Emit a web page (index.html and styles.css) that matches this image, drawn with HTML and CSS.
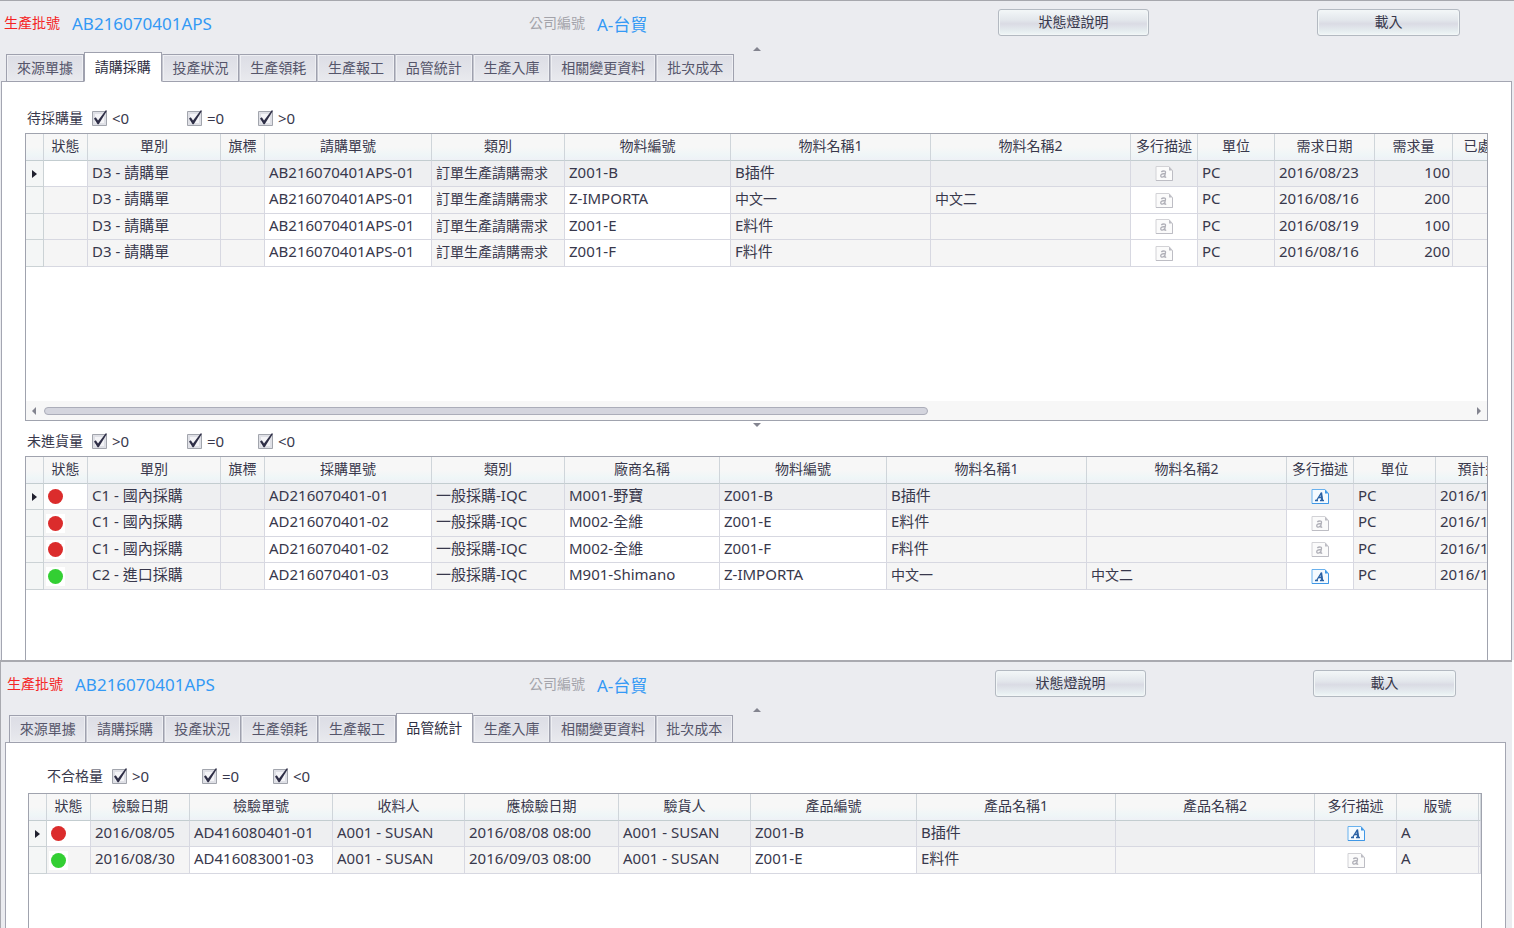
FILE: index.html
```
<!DOCTYPE html>
<html lang="zh-Hant">
<head>
  <meta charset="UTF-8">
  <meta name="viewport" content="width=device-width, initial-scale=1.0">
  <title>生產批號</title>
  <link rel="stylesheet" href="styles.css">
</head>
<body>

<svg class="defs" aria-hidden="true">
  <symbol id="note-on" viewBox="0 0 18 15">
    <path d="M1 .5h13l3.500 4v10h-16.500z" fill="#f4faff" stroke="#69b1ee"/>
    <path d="M1 14.500h16.500V4.500" fill="none" stroke="#3f97e6"/>
    <path d="M14 .5l3.500 4H14z" fill="#3f97e6"/>
    <path d="M4 11.500h3M9 11.500h4M5.500 11.500L10.500 3.500M10.500 3.500L11.500 11.500M7.500 8.500h3.500" fill="none" stroke="#2b62a5" stroke-width="1.300"/>
    <path d="M10.300 3l1.700 8.500h-1.700l-1-6z" fill="#2b62a5"/>
  </symbol>
  <symbol id="note-off" viewBox="0 0 18 15">
    <path d="M1 .5h13l3.500 4v10h-16.500z" fill="#fbfbfb" stroke="#d2d2d6"/>
    <path d="M1 14.500h16.500V4.500" fill="none" stroke="#bdbdc4"/>
    <path d="M14 .5l3.500 4H14z" fill="#bdbdc4"/>
    <path d="M6.300 6c1-1.200 4.500-1.600 4.200.3L9.700 10.500c-.1.900.6.900 1.500.4M10 7.500C7.500 7.500 5.600 8.500 5.700 10c.2 1.700 2.800 1.300 4-.4" fill="none" stroke="#b0b0b8" stroke-width="1.300"/>
  </symbol>
</svg>

<section class="window purchase">
  <header class="topbar">
    <div class="field"><span class="label required">生產批號</span><span class="value">AB216070401APS</span></div>
    <div class="field"><span class="label">公司編號</span><span class="value">A-台貿</span></div>
    <div><button class="btn legend">狀態燈說明</button></div>
    <div><button class="btn">載入</button></div>
  </header>
  <div class="splitter"><i class="up"></i></div>
  <nav class="tabs">
    <button>來源單據</button>
    <button class="active">請購採購</button>
    <button>投產狀況</button>
    <button>生產領耗</button>
    <button>生產報工</button>
    <button>品管統計</button>
    <button>生產入庫</button>
    <button>相關變更資料</button>
    <button>批次成本</button>
  </nav>
  <div class="panel">
    <div class="filter">
      <span>待採購量</span>
      <label class="first"><input type="checkbox" checked>&lt;0</label>
      <label><input type="checkbox" checked>=0</label>
      <label><input type="checkbox" checked>&gt;0</label>
    </div>
    <div class="grid request">
      <div class="rows">
      <table>
        <colgroup>
          <col class="w-mark"><col class="w-flag"><col class="w-type"><col class="w-flag"><col class="w-item"><col class="w-type"><col class="w-code"><col class="w-name"><col class="w-name"><col class="w-desc"><col class="w-unit"><col class="w-date"><col class="w-qty"><col class="w-qty">
        </colgroup>
        <thead>
          <tr><th></th><th>狀態</th><th>單別</th><th>旗標</th><th>請購單號</th><th>類別</th><th>物料編號</th><th>物料名稱1</th><th>物料名稱2</th><th>多行描述</th><th>單位</th><th>需求日期</th><th>需求量</th><th>已處理量</th></tr>
        </thead>
        <tbody>
          <tr class="current"><td class="mark"><i></i></td><td class="focus"></td><td>D3 - 請購單</td><td></td><td class="edit">AB216070401APS-01</td><td class="cjk">訂單生產請購需求</td><td class="edit">Z001-B</td><td>B插件</td><td></td><td class="edit note"><svg><use href="#note-off"/></svg></td><td>PC</td><td>2016/08/23</td><td class="num">100</td><td></td></tr>
          <tr><td class="mark"></td><td></td><td>D3 - 請購單</td><td></td><td class="edit">AB216070401APS-01</td><td class="cjk">訂單生產請購需求</td><td class="edit">Z-IMPORTA</td><td class="cjk">中文一</td><td class="cjk">中文二</td><td class="edit note"><svg><use href="#note-off"/></svg></td><td>PC</td><td>2016/08/16</td><td class="num">200</td><td></td></tr>
          <tr><td class="mark"></td><td></td><td>D3 - 請購單</td><td></td><td class="edit">AB216070401APS-01</td><td class="cjk">訂單生產請購需求</td><td class="edit">Z001-E</td><td>E料件</td><td></td><td class="edit note"><svg><use href="#note-off"/></svg></td><td>PC</td><td>2016/08/19</td><td class="num">100</td><td></td></tr>
          <tr><td class="mark"></td><td></td><td>D3 - 請購單</td><td></td><td class="edit">AB216070401APS-01</td><td class="cjk">訂單生產請購需求</td><td class="edit">Z001-F</td><td>F料件</td><td></td><td class="edit note"><svg><use href="#note-off"/></svg></td><td>PC</td><td>2016/08/16</td><td class="num">200</td><td></td></tr>
        </tbody>
      </table>
      </div>
      <div class="scrollbar">
        <button class="left" aria-label="向左"></button>
        <div class="track"><div class="thumb"></div></div>
        <button class="right" aria-label="向右"></button>
      </div>
    </div>
    <div class="splitter"><i class="down"></i></div>
    <div class="filter">
      <span>未進貨量</span>
      <label class="first"><input type="checkbox" checked>&gt;0</label>
      <label><input type="checkbox" checked>=0</label>
      <label><input type="checkbox" checked>&lt;0</label>
    </div>
    <div class="grid order">
      <table>
        <colgroup>
          <col class="w-mark"><col class="w-flag"><col class="w-type"><col class="w-flag"><col class="w-item"><col class="w-type"><col class="w-vendor"><col class="w-item"><col class="w-name"><col class="w-name"><col class="w-desc"><col class="w-ver"><col class="w-date">
        </colgroup>
        <thead>
          <tr><th></th><th>狀態</th><th>單別</th><th>旗標</th><th>採購單號</th><th>類別</th><th>廠商名稱</th><th>物料編號</th><th>物料名稱1</th><th>物料名稱2</th><th>多行描述</th><th>單位</th><th>預計進貨</th></tr>
        </thead>
        <tbody>
          <tr class="current"><td class="mark"><i></i></td><td class="focus light"><i class="red"></i></td><td>C1 - 國內採購</td><td></td><td class="edit">AD216070401-01</td><td>一般採購-IQC</td><td class="edit">M001-野寶</td><td class="edit">Z001-B</td><td>B插件</td><td></td><td class="edit note"><svg><use href="#note-on"/></svg></td><td>PC</td><td>2016/1</td></tr>
          <tr><td class="mark"></td><td class="light"><i class="red"></i></td><td>C1 - 國內採購</td><td></td><td class="edit">AD216070401-02</td><td>一般採購-IQC</td><td class="edit">M002-全維</td><td class="edit">Z001-E</td><td>E料件</td><td></td><td class="edit note"><svg><use href="#note-off"/></svg></td><td>PC</td><td>2016/1</td></tr>
          <tr><td class="mark"></td><td class="light"><i class="red"></i></td><td>C1 - 國內採購</td><td></td><td class="edit">AD216070401-02</td><td>一般採購-IQC</td><td class="edit">M002-全維</td><td class="edit">Z001-F</td><td>F料件</td><td></td><td class="edit note"><svg><use href="#note-off"/></svg></td><td>PC</td><td>2016/1</td></tr>
          <tr><td class="mark"></td><td class="light"><i class="green"></i></td><td>C2 - 進口採購</td><td></td><td class="edit">AD216070401-03</td><td>一般採購-IQC</td><td class="edit">M901-Shimano</td><td class="edit">Z-IMPORTA</td><td class="cjk">中文一</td><td class="cjk">中文二</td><td class="edit note"><svg><use href="#note-on"/></svg></td><td>PC</td><td>2016/1</td></tr>
        </tbody>
      </table>
    </div>
  </div>
</section>

<section class="window quality">
  <header class="topbar">
    <div class="field"><span class="label required">生產批號</span><span class="value">AB216070401APS</span></div>
    <div class="field"><span class="label">公司編號</span><span class="value">A-台貿</span></div>
    <div><button class="btn legend">狀態燈說明</button></div>
    <div><button class="btn">載入</button></div>
  </header>
  <div class="splitter"><i class="up"></i></div>
  <nav class="tabs">
    <button>來源單據</button>
    <button>請購採購</button>
    <button>投產狀況</button>
    <button>生產領耗</button>
    <button>生產報工</button>
    <button class="active">品管統計</button>
    <button>生產入庫</button>
    <button>相關變更資料</button>
    <button>批次成本</button>
  </nav>
  <div class="panel">
    <div class="filter">
      <span>不合格量</span>
      <label class="first"><input type="checkbox" checked>&gt;0</label>
      <label><input type="checkbox" checked>=0</label>
      <label><input type="checkbox" checked>&lt;0</label>
    </div>
    <div class="grid inspect">
      <table>
        <colgroup>
          <col class="w-mark"><col class="w-flag"><col class="w-date"><col class="w-check"><col class="w-type"><col class="w-vendor"><col class="w-type"><col class="w-code"><col class="w-name"><col class="w-name"><col class="w-ver"><col class="w-ver"><col>
        </colgroup>
        <thead>
          <tr><th></th><th>狀態</th><th>檢驗日期</th><th>檢驗單號</th><th>收料人</th><th>應檢驗日期</th><th>驗貨人</th><th>產品編號</th><th>產品名稱1</th><th>產品名稱2</th><th>多行描述</th><th>版號</th><th></th></tr>
        </thead>
        <tbody>
          <tr class="current"><td class="mark"><i></i></td><td class="focus light"><i class="red"></i></td><td>2016/08/05</td><td class="edit">AD416080401-01</td><td>A001 - SUSAN</td><td>2016/08/08 08:00</td><td>A001 - SUSAN</td><td class="edit">Z001-B</td><td>B插件</td><td></td><td class="edit note"><svg><use href="#note-on"/></svg></td><td>A</td><td class="rest"></td></tr>
          <tr><td class="mark"></td><td class="light"><i class="green"></i></td><td>2016/08/30</td><td class="edit">AD416083001-03</td><td>A001 - SUSAN</td><td>2016/09/03 08:00</td><td>A001 - SUSAN</td><td class="edit">Z001-E</td><td>E料件</td><td></td><td class="edit note"><svg><use href="#note-off"/></svg></td><td>A</td><td class="rest"></td></tr>
        </tbody>
      </table>
    </div>
  </div>
</section>

</body>
</html>
```

FILE: styles.css
```
* {
  box-sizing: border-box;
}
body {
  margin: 0;
  height: 100vh;
  display: flex;
  flex-direction: column;
  overflow: hidden;
  background-color: #fff;
  color: #38384c;
  font-family: "Noto Sans", "Noto Sans CJK TC", sans-serif;
  font-size: 15px;
}
button, input {
  font: inherit;
  color: inherit;
  margin: 0;
  padding: 0;
}
.defs {
  display: none;
}

/* window frame */
.window {
  display: flex;
  flex-direction: column;
  background-color: #ebecf0;
}
.purchase {
  border-top: 1px solid #a6a7ad;
  flex: none;
}
.quality {
  flex: 1;
  min-height: 0;
  margin-right: 2px;
  border-top: 2px solid #a9aab0;
  border-left: 1px solid #a9aab0;
}

.topbar {
  display: grid;
  grid-template-columns: 529fr 469fr 319fr 197fr;
  height: 45px;
  padding-top: 8px;
}
.quality .topbar {
  grid-template-columns: 528fr 466fr 318fr 199fr;
}
.field {
  display: flex;
  align-items: center;
  gap: 12px;
  height: 28px;
  white-space: nowrap;
}
.label {
  color: #a3a3aa;
  font-size: 14px;
  padding-bottom: 2px;
}
.label.required {
  color: #f52323;
  margin-left: 4px;
}
.quality .label.required {
  margin-left: 6px;
}
.value {
  color: #3399f5;
  font-size: 17px;
}
.btn {
  width: 143px;
  height: 27px;
  padding-bottom: 3px;
  border: 1px solid #b3b9c1;
  border-radius: 3px;
  background: linear-gradient(#f3f7f8, #e3e7ec 40%, #dadbe4 55%, #e6edf0 85%, #f0f7f7);
  box-shadow: inset 0 0 0 1px #f2f6f7;
  font-size: 14px;
}
.btn.legend {
  width: 151px;
}

.splitter {
  display: flex;
  justify-content: center;
  height: 6px;
}
.splitter i {
  border: 4px solid transparent;
  height: 0;
}
.splitter .up {
  border-top: 0;
  border-bottom-color: #83848f;
  margin-top: 1px;
}
.splitter .down {
  border-bottom: 0;
  border-top-color: #83848f;
  margin-top: 2px;
}

/* tabs */
.tabs {
  display: flex;
  align-items: flex-end;
  width: 728px;
  height: 30px;
  margin-left: 6px;
  margin-bottom: -1px;
  z-index: 1;
}
.quality .tabs {
  width: 724px;
  margin-left: 8px;
}
.tabs button {
  flex: 1 1 auto;
  height: 28px;
  padding-bottom: 2px;
  border: 1px solid #9fa1ae;
  border-left-color: #c4c6cf;
  background: linear-gradient(#dcdde5, #e3e4ea 60%, #e9eaee);
  box-shadow: inset 0 0 0 1px #eeeff3;
  color: #55556a;
  font-size: 14px;
  white-space: nowrap;
}
.tabs button:first-child {
  border-left-color: #9fa1ae;
}
.tabs .active {
  height: 30px;
  background: #fff;
  border-color: #9fa1ae;
  border-bottom-color: #fff;
  box-shadow: none;
  color: #2e2e42;
}

.panel {
  margin: 0 2px 0 1px;
  padding: 22px 23px 0 23px;
  border: 1px solid #a4a6b2;
  border-bottom: 0;
  background-color: #fff;
}
.quality .panel {
  flex: 1;
  display: flex;
  flex-direction: column;
  margin: 0 6px 0 4px;
  padding: 19px 23px 0 22px;
}

/* filter row */
.filter {
  display: flex;
  align-items: center;
  height: 27px;
  margin-bottom: 2px;
  padding-left: 2px;
}
.filter span {
  font-size: 14px;
  width: 65px;
  padding-bottom: 2px;
}
.filter label {
  display: flex;
  align-items: center;
  gap: 4px;
  width: 71px;
}
.filter .first {
  width: 95px;
}
.quality .filter {
  padding-left: 19px;
  margin-bottom: 4px;
}
.quality .filter .first {
  width: 90px;
}
.filter input {
  appearance: none;
  width: 16px;
  height: 16px;
  background: url("data:image/svg+xml,%3Csvg xmlns='http://www.w3.org/2000/svg' width='16' height='16'%3E%3Cpath d='M.5 1.500h14v14H.5z' fill='%23dfe0e6' stroke='%23a2a5ad'/%3E%3Cpath d='M3 4h9v9H3z' fill='%23f4f4f7'/%3E%3Cpath d='M2 8.500l1.800-1.300 2.200 3.300L13.800.2l1.200.6L6.700 14.200H5.600z' fill='%232f2f47'/%3E%3C/svg%3E") no-repeat;
}

/* data grids */
.grid {
  border: 1px solid #a0a3ae;
  overflow: hidden;
}
.request {
  height: 288px;
  display: flex;
  flex-direction: column;
}
.rows {
  flex: 1;
  overflow: hidden;
}
.order {
  height: 204px;
  border-bottom: 0;
}
.inspect {
  flex: 1;
  border-bottom: 0;
}

table {
  table-layout: fixed;
  width: 1px;
  border-collapse: separate;
  border-spacing: 0;
}
.inspect table {
  width: 100%;
}
.w-mark { width: 18px; }
.w-flag { width: 44px; }
.w-type { width: 133px; }
.w-item { width: 167px; }
.w-code { width: 166px; }
.w-name { width: 200px; }
.w-desc { width: 67px; }
.w-unit { width: 77px; }
.w-date { width: 100px; }
.w-qty { width: 78px; }
.w-vendor { width: 155px; }
.w-ver { width: 82px; }
.w-check { width: 143px; }
.inspect .w-date { width: 99px; }
.inspect .w-type { width: 132px; }
.inspect .w-vendor { width: 154px; }
.inspect .w-name { width: 199px; }

th {
  height: 27px;
  padding: 0;
  border-right: 1px solid #cfd5da;
  border-bottom: 1px solid #c3cdd0;
  background: linear-gradient(#f7f7f7 50%, #eff6f7 80%, #eef1f6);
  font-size: 14px;
  font-weight: normal;
  line-height: 24px;
  vertical-align: top;
  white-space: nowrap;
}
td {
  height: 26px;
  padding: 0 3px 0 4px;
  border-right: 1px solid #d7d8e1;
  border-bottom: 1px solid #d7d8e1;
  background-color: #f5f5f5;
  line-height: 23px;
  vertical-align: top;
  white-space: nowrap;
}
tr:nth-child(even) td {
  height: 27px;
}
td.cjk {
  font-size: 14px;
}
td.num {
  text-align: right;
  padding-right: 2px;
}
td.rest {
  padding: 0;
}
td.edit {
  background-color: #fff;
}
.current td {
  background-color: #eeeff1;
}
.current td.focus {
  background-color: #fff;
}
td.mark,
.current td.mark {
  padding: 0;
  background-color: #f4f6f6;
  border-color: #cbd2d5;
  vertical-align: middle;
}
.mark i {
  display: block;
  width: 0;
  margin-left: 6px;
  border: 4px solid transparent;
  border-left: 5px solid #20202e;
  border-right: 0;
}
td.note {
  padding: 0;
  text-align: center;
  vertical-align: middle;
}
.note svg {
  display: block;
  width: 18px;
  height: 15px;
  margin: 0 auto;
}
td.light {
  padding: 0 0 0 2px;
  vertical-align: middle;
}
.light i {
  display: block;
  width: 19px;
  height: 19px;
  padding: 2px;
  background-color: #fff;
}
.light i::before {
  content: "";
  display: block;
  height: 15px;
  border-radius: 50%;
}
.light .red::before {
  background-color: #db2c2c;
}
.light .green::before {
  background-color: #33cf33;
}

/* horizontal scroll bar */
.scrollbar {
  display: flex;
  align-items: center;
  height: 19px;
  padding: 0 6px;
  background-color: #f7f7f7;
}
.scrollbar button {
  width: 0;
  height: 0;
  border: 4px solid transparent;
  background: none;
}
.scrollbar .left {
  border-left: 0;
  border-right-color: #83848f;
}
.scrollbar .right {
  border-right: 0;
  border-left-color: #83848f;
}
.track {
  flex: 1;
  margin: 0 8px;
}
.thumb {
  width: 62%;
  height: 8px;
  border: 1px solid #abadb9;
  border-radius: 4px;
  background-color: #d4d5de;
}
```
